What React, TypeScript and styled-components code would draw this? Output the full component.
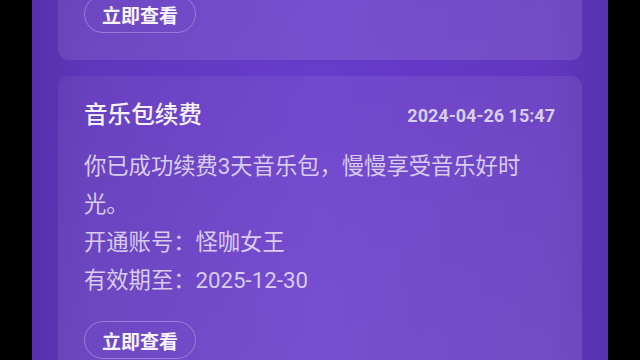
import React from "react";
import styled, { createGlobalStyle } from "styled-components";

const Global = createGlobalStyle`
  html, body {
    margin: 0;
    padding: 0;
    background: #000;
  }
  body {
    font-family: Roboto, "Noto Sans CJK SC", "Noto Sans", sans-serif;
  }
`;

const Screen = styled.div`
  width: 640px;
  height: 360px;
  display: flex;
  justify-content: center;
  background: #000;
  overflow: hidden;
`;

const Phone = styled.div`
  width: 576px;
  height: 360px;
  overflow: hidden;
  background: linear-gradient(90deg, #5631ab 0%, #6036bc 10%, #683ccb 50%, #6236bf 90%, #5632ae 100%);
`;

const List = styled.div`
  display: flex;
  flex-direction: column;
  gap: 16px;
  padding: 0 26px;
  margin-top: -250px;
`;

const Card = styled.div`
  background: linear-gradient(160deg, rgba(255, 255, 255, 0.05) 0%, rgba(255, 255, 255, 0.09) 60%, rgba(255, 255, 255, 0.11) 100%);
  border-radius: 11px;
  padding: 23px 27px 27px 26px;
  display: flex;
  flex-direction: column;
  align-items: flex-start;
`;

const Head = styled.div`
  align-self: stretch;
  display: flex;
  align-items: center;
  justify-content: space-between;
  height: 32px;
  margin-bottom: 16px;
`;

const Title = styled.div`
  font-size: 23.6px;
  line-height: 32px;
  font-weight: 500;
  color: #f6f2fc;
`;

const Time = styled.div`
  font-family: Roboto, sans-serif;
  font-size: 18px;
  font-weight: 700;
  color: #d9cdef;
`;

const Body = styled.div`
  font-size: 22.3px;
  line-height: 38px;
  color: #d8ccef;
  max-width: 448px;
`;

const Button = styled.button`
  margin-top: 22px;
  height: 38px;
  width: 112px;
  border-radius: 19px;
  border: 1px solid rgba(255, 255, 255, 0.28);
  background: transparent;
  color: #f7f3fd;
  font-family: Roboto, "Noto Sans CJK SC", sans-serif;
  font-size: 19px;
  font-weight: 700;
  display: flex;
  align-items: center;
  justify-content: center;
  padding: 0;
`;

type Notice = {
  title: string;
  time: string;
  lines: string[];
};

const notices: Notice[] = [
  {
    title: "音乐包开通",
    time: "2024-04-23 10:12",
    lines: ["你已成功开通3天音乐包，尽情享受音乐好时光。", "开通账号：怪咖女王", "有效期至：2025-12-27"],
  },
  {
    title: "音乐包续费",
    time: "2024-04-26 15:47",
    lines: ["你已成功续费3天音乐包，慢慢享受音乐好时光。", "开通账号：怪咖女王", "有效期至：2025-12-30"],
  },
];

export default function App() {
  return (
    <>
      <Global />
      <Screen>
        <Phone>
          <List>
            {notices.map((n) => (
              <Card key={n.time}>
                <Head>
                  <Title>{n.title}</Title>
                  <Time>{n.time}</Time>
                </Head>
                {n.lines.map((l) => (
                  <Body key={l}>{l}</Body>
                ))}
                <Button>立即查看</Button>
              </Card>
            ))}
          </List>
        </Phone>
      </Screen>
    </>
  );
}
